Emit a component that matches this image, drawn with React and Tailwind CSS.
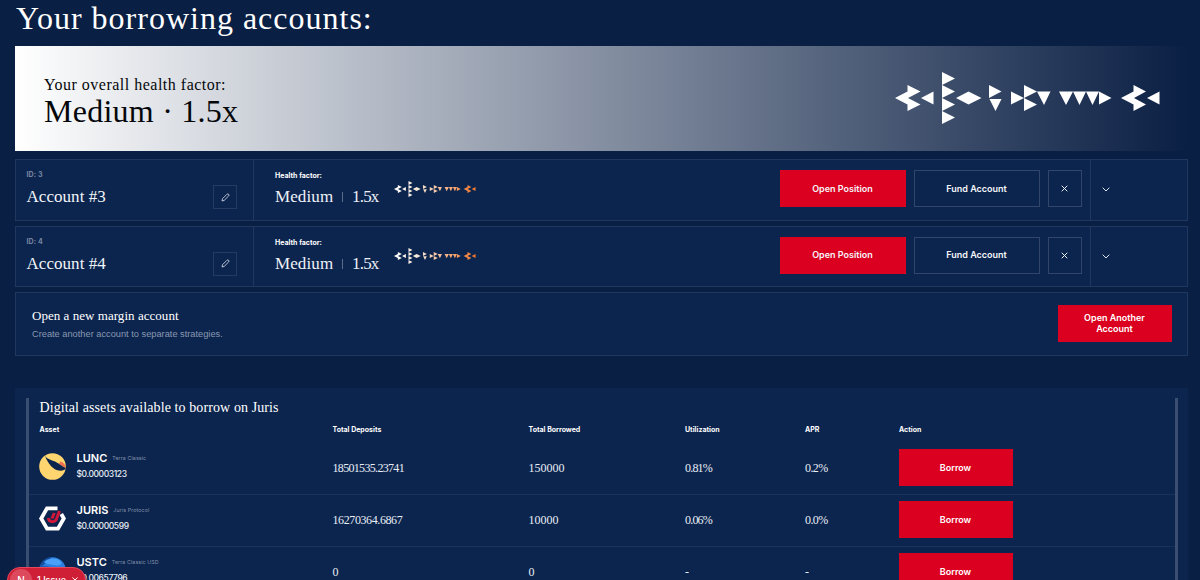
const serif = "font-['Liberation_Serif',serif]";
const sans = "font-['Inter',sans-serif]";

function Glyphs({ className, fill }) {
  return (
    <svg className={className} viewBox="0 0 266 52" preserveAspectRatio="none" fill={fill}>
      <defs>
        <linearGradient id="glyphFade" gradientUnits="userSpaceOnUse" x1="0" y1="0" x2="266" y2="0">
          <stop offset="0" stopColor="#ffffff" />
          <stop offset="0.3" stopColor="#f7e6d6" />
          <stop offset="0.65" stopColor="#f6b184" />
          <stop offset="1" stopColor="#f4762a" />
        </linearGradient>
      </defs>
      <path d="M0 26L12.5 19.500V13L25.5 19.5L13 26L25.5 32.5L12.5 39V32.500ZM26 26L38.500 19.500V32.500Z" />
      <path d="M47 0L60 6.500L47 13ZM47 13L60 19.500L47 26ZM47 26L60 32.500L47 39ZM47 39L60 45.500L47 52ZM61 26L73.500 19.500L86.500 26L73.500 32.500Z" />
      <path d="M94 13L106.500 19.500L94 26ZM94.500 27H106.500L100.500 39Z" />
      <path d="M116 19.500L129 26L116 32.500ZM129 13L142 19.500L129 26ZM129 26L142 32.500L129 39ZM142 19.500H155.500L149 33Z" />
      <path d="M164 19.500H178L171 33ZM178 19.500H191L184.500 33ZM191 19.500H204L197.500 33ZM204 19.500L216.500 26L204 32.500Z" />
      <path d="M226 26L238.500 19.500V13L251 19.500L239 26L251 32.500L238.500 39V32.500ZM252 26L264.500 19.500V32.500Z" />
    </svg>
  );
}

function Pencil() {
  return (
    <svg className="h-[9px] w-[9px]" viewBox="0 0 9 9" fill="none" stroke="#dfe5ef" strokeWidth="0.8">
      <path d="M1 8L1.500 5.700L5.900 1.300A0.900 0.900 0 0 1 7.600 3L3.200 7.400Z" />
    </svg>
  );
}

function Account({ id }) {
  return (
    <section className="flex h-[61.5px] border border-[#20375f] bg-[#0c254e]">
      <div className="flex w-[238px] justify-between border-r border-[#20375f] pl-[10.5px] pr-4">
        <div>
          <div className={`${sans} mt-[10px] text-[7px] font-bold leading-[10px] tracking-[0.1px] text-[#7887a2]`}>ID: {id}</div>
          <div className={`${serif} mt-[5px] whitespace-nowrap text-[17px] leading-6 tracking-[0.05px] text-[#f1f4f8]`}>Account #{id}</div>
        </div>
        <div className="mt-[25px] flex h-6 w-6 items-center justify-center border border-[#253b62]"><Pencil /></div>
      </div>
      <div className="flex flex-1 pl-[21px]">
        <div className="w-[119px]">
          <div className={`${sans} mt-[11px] whitespace-nowrap text-[7px] font-bold leading-[10px] text-white`}>Health factor:</div>
          <div className={`${serif} mt-[4px] flex items-center whitespace-nowrap text-[17px] leading-6 text-[#edf1f7]`}>
            <span className="w-[67px] tracking-[0.1px]">Medium</span>
            <span className="mr-[9px] h-[10px] w-px bg-[#5c6c89]" />
            <span className="tracking-[-0.8px]">1.5x</span>
          </div>
        </div>
        <Glyphs className="mt-[21px] h-4 w-[82px]" fill="url(#glyphFade)" />
      </div>
      <div className={`${sans} flex gap-2 pr-[8px] pt-[10px] text-[9px] font-semibold text-[#f5f6fa]`}>
        <button className="h-[37px] w-[126px] bg-[#dc0020]">Open Position</button>
        <button className="h-[37px] w-[126px] border border-[#32466a]">Fund Account</button>
        <button className="flex h-[37px] w-[34.5px] items-center justify-center border border-[#32466a]">
          <svg className="h-[7px] w-[7px]" viewBox="0 0 7 7" fill="none" stroke="#edf1f7" strokeWidth="1"><path d="M0.700 0.700L6.300 6.300M6.300 0.700L0.700 6.300" /></svg>
        </button>
      </div>
      <div className="w-[97px] border-l border-[#20375f] pl-[11px] pt-[27px]">
        <svg className="h-[5px] w-[8px]" viewBox="0 0 8 5" fill="none" stroke="#dfe5ef" strokeWidth="1"><path d="M0.700 0.700L4 4L7.300 0.700" /></svg>
      </div>
    </section>
  );
}

function LuncLogo() {
  return (
    <svg className="h-[27px] w-[27px]" viewBox="0 0 27 27">
      <circle cx="13.500" cy="13.500" r="13.300" fill="#fed56f" />
      <path d="M21.500 8.500C24.500 9 26.300 11.500 26.800 15C25 15 22.500 13 20 10.500Z" fill="#f0704f" />
      <path d="M6 3C8 6 12 7 16 8.500C20.500 10.500 23 13.500 26.800 15C26 18 20 18.800 15.500 16C11 13 8 8 6 3Z" fill="#0c254e" />
    </svg>
  );
}

function JurisLogo() {
  return (
    <svg className="h-[27px] w-[27px]" viewBox="0 0 27 27" fill="none">
      <path d="M18.500 3.300H8L2.200 13.500L8 23.600H19L24.800 13.500L22.300 9" stroke="#fff" strokeWidth="3.800" />
      <path d="M20.500 6L17.300 14.500A4.300 4.300 0 0 1 9.300 13M15.300 8L13 13.500" stroke="#d3173a" strokeWidth="3" />
    </svg>
  );
}

function UstcLogo() {
  return (
    <svg className="h-[27px] w-[27px]" viewBox="0 0 27 27">
      <circle cx="13.500" cy="13.500" r="13.300" fill="#2c80e0" />
      <path d="M0 11C2 4 8 0 13 0L7 6Z" fill="#174ea2" />
      <path d="M5 5C9 1 18 0 22 5C23 8 19 9 15 8S8 8 5 5Z" fill="#4ba1f8" />
      <path d="M1 9C8 8 14 12 26 12L25 18C16 17 10 11 1 10Z" fill="#1c5cb4" />
    </svg>
  );
}

const cols = "grid grid-cols-[293px_196px_156.500px_120px_94px_1fr]";

const assets = [
  { symbol: "LUNC", name: "Terra Classic", price: "$0.00003123", deposits: "18501535.23741", depositsFit: "tracking-[-0.68px]", borrowed: "150000", use: "0.81%", apr: "0.2%", Logo: LuncLogo },
  { symbol: "JURIS", name: "Juris Protocol", price: "$0.00000599", deposits: "16270364.6867", depositsFit: "tracking-[-0.4px]", borrowed: "10000", use: "0.06%", apr: "0.0%", Logo: JurisLogo },
  { symbol: "USTC", name: "Terra Classic USD", price: "$0.00657796", deposits: "0", depositsFit: "", borrowed: "0", use: "-", apr: "-", Logo: UstcLogo },
];

function AssetRow({ asset }) {
  const { Logo } = asset;
  return (
    <div className={`${cols} h-[52px] border-b border-[#1b335b] pl-[10px] ${serif} text-[12px] leading-[51px] text-[#e9eef6]`}>
      <div className={`${sans} flex gap-[10.5px] pt-[10px] leading-none`}>
        <Logo />
        <div className="-mt-px">
          <div className="flex items-center gap-[5px] whitespace-nowrap">
            <span className="text-[11px] font-semibold leading-[13px] text-white">{asset.symbol}</span>
            <span className="text-[5.300px] leading-[13px] tracking-[0.100px] text-[#8190aa]">{asset.name}</span>
          </div>
          <div className="mt-[3px] text-[8.500px] font-medium leading-3 tracking-[-0.4px]">{asset.price}</div>
        </div>
      </div>
      <div className={`pl-[0.5px] ${asset.depositsFit}`}>{asset.deposits}</div>
      <div className="pl-[0.5px]">{asset.borrowed}</div>
      <div className="pl-[0.5px] tracking-[-0.8px]">{asset.use}</div>
      <div className="pl-[0.5px] tracking-[-0.6px]">{asset.apr}</div>
      <button className={`${sans} mt-[6px] h-[37px] w-[114px] bg-[#dc0020] text-[9px] font-semibold leading-none text-white`}>Borrow</button>
    </div>
  );
}

export default function App() {
  return (
    <main className="relative h-[580px] w-[1200px] overflow-hidden bg-[#0a1f44] pl-[15px] pr-3">
      <h1 className={`${serif} h-[46px] whitespace-nowrap pl-px pt-px text-[32px] leading-[34px] tracking-[1px] text-white`}>Your borrowing accounts:</h1>
      <section className="flex h-[105px] justify-between bg-[linear-gradient(90deg,#ffffff_0%,#0a1f44_100%)] pl-[29px] pr-[27px]">
        <div className={`${serif} whitespace-nowrap text-[#05070b]`}>
          <div className="mt-[30px] text-[16px] leading-[18px] tracking-[0.500px]">Your overall health factor:</div>
          <div className="text-[32px] leading-[34px] tracking-[0.250px]">Medium · 1.5x</div>
        </div>
        <Glyphs className="mt-[26px] h-[52px] w-[266px]" fill="#ffffff" />
      </section>
      <div className="mt-2 flex flex-col gap-[5px]">
        <Account id={3} />
        <Account id={4} />
        <section className="flex h-[63.5px] items-start justify-between border border-[#20375f] bg-[#0c254e] pl-4 pr-[15.5px] pt-3">
          <div className="whitespace-nowrap">
            <div className={`${serif} mt-[3px] text-[13px] leading-4 tracking-[0.040px] text-white`}>Open a new margin account</div>
            <div className="mt-[4px] font-['Liberation_Sans',sans-serif] text-[9.25px] leading-3 text-[#8998b1]">Create another account to separate strategies.</div>
          </div>
          <button className={`${sans} h-[37px] w-[114px] bg-[#dc0020] px-5 pb-[2px] text-[9px] font-semibold leading-[11px] text-white`}>Open Another Account</button>
        </section>
      </div>
      <section className="mt-8 h-[200px] bg-[#0c254e] pl-[11px] pr-[10px] pt-[10px]">
        <div className="h-[190px] border-l-[3px] border-r-[3px] border-[#3a4e72]">
          <h2 className={`${serif} pl-[10.5px] text-[14px] leading-[19px] tracking-[0.100px] text-white`}>Digital assets available to borrow on Juris</h2>
          <div className={`${cols} ${sans} h-[26px] pl-[10.5px] text-[7px] font-bold leading-[25px] text-white`}>
            <span>Asset</span><span>Total Deposits</span><span>Total Borrowed</span><span>Utilization</span><span>APR</span><span>Action</span>
          </div>
          {assets.map((a) => <AssetRow key={a.symbol} asset={a} />)}
        </div>
      </section>
      <div className={`${sans} absolute left-[7px] top-[567px] flex h-[26px] w-[79px] items-center rounded-full border border-[#e5485c] bg-[#cf1f37] pl-[2px] text-[9px] font-medium text-white`}>
        <span className="flex h-[22px] w-[22px] items-center justify-center rounded-full bg-[#dd4a5e] text-[10px]">N</span>
        <span className="ml-[5px] whitespace-nowrap">1 Issue</span>
        <svg className="ml-[6px] h-[6px] w-[6px]" viewBox="0 0 6 6" stroke="#fff" strokeWidth="1"><path d="M0.500 0.500L5.500 5.500M5.500 0.500L0.500 5.500" /></svg>
      </div>
    </main>
  );
}
